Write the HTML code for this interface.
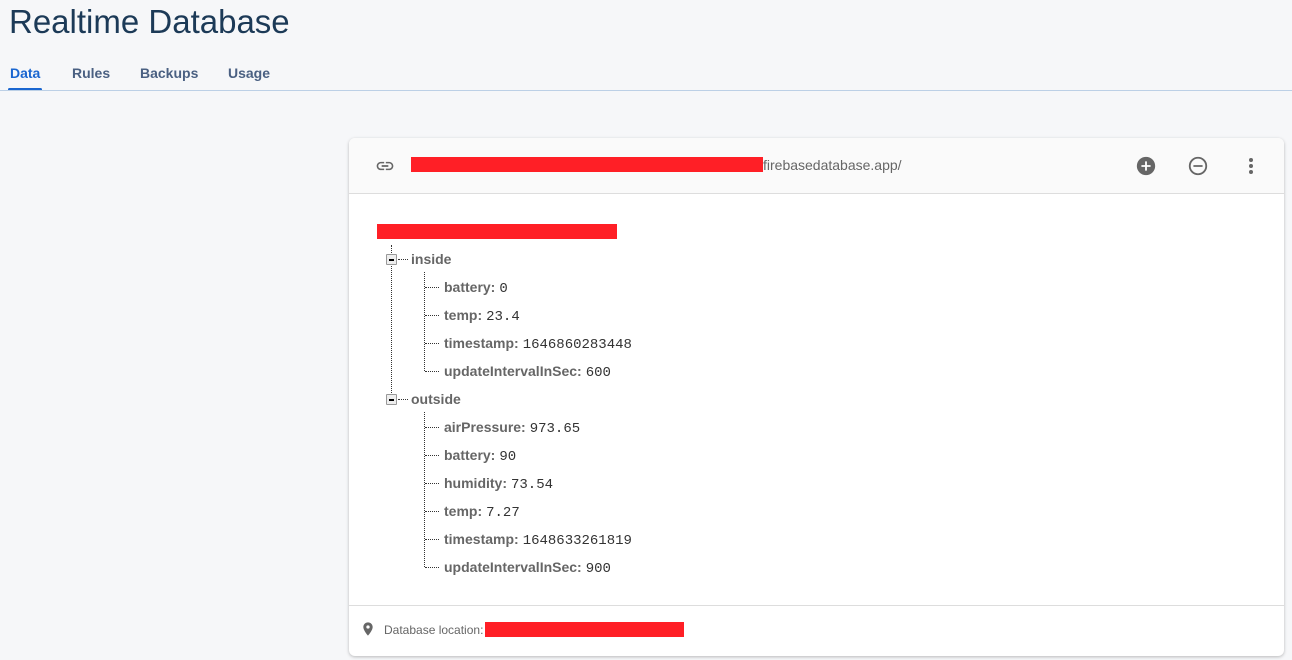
<!DOCTYPE html>
<html><head><style>
body{margin:0;width:1292px;height:660px;background:#f6f7f9;font-family:"Liberation Sans",Arial,sans-serif;position:relative;overflow:hidden}
.a{position:absolute}
h1{position:absolute;left:9px;top:3px;margin:0;font-size:33px;font-weight:normal;color:#1c3a57;letter-spacing:0}
.tab{position:absolute;top:65px;font-size:14px;font-weight:bold;color:#4a6082}
.card{position:absolute;left:349px;top:138px;width:935px;height:518px;background:#fff;border-radius:6px;box-shadow:0 1px 3px rgba(0,0,0,.25);overflow:hidden}
.hdr{position:absolute;left:0;top:0;right:0;height:55px;background:#fafafa;border-bottom:1px solid #ddd}
.red{position:absolute;background:#ff1f26}
.row{position:absolute;font-size:14px;color:#666;font-weight:bold;white-space:nowrap}
.row span{font-family:"Liberation Mono",monospace;font-weight:normal;color:#333;font-size:14px;margin-left:4px}
.vl{position:absolute;border-left:1px dotted #333;width:0}
.hl{position:absolute;border-top:1px dotted #333;height:0}
.box{position:absolute;width:9px;height:9px;border:1px solid #999;background:#eee;border-radius:1px}
.box:after{content:"";position:absolute;left:2px;top:4px;width:5px;height:2px;background:#000}
</style></head><body>
<h1>Realtime Database</h1>
<div class="tab" style="left:10px;color:#1a66d0">Data</div>
<div class="tab" style="left:72px">Rules</div>
<div class="tab" style="left:140px">Backups</div>
<div class="tab" style="left:228px">Usage</div>
<div class="a" style="left:8px;top:88px;width:34px;height:3px;background:#1a66d0;border-radius:2px"></div>
<div class="a" style="left:0;top:90px;width:1292px;height:1px;background:#bcd0e6"></div>

<div class="card">
<div class="hdr">
<svg class="a" style="left:25px;top:18px" width="22" height="20" viewBox="0 0 24 24"><path fill="#666" d="M3.9 12c0-1.710 1.39-3.1 3.1-3.1h4V7H7c-2.76 0-5 2.240-5 5s2.24 5 5 5h4v-1.9H7c-1.71 0-3.1-1.39-3.1-3.1zM8 13h8v-2H8v2zm9-6h-4v1.9h4c1.71 0 3.1 1.39 3.1 3.1s-1.39 3.1-3.1 3.1h-4V17h4c2.76 0 5-2.24 5-5s-2.24-5-5-5z"/></svg>
<div class="red" style="left:62px;top:19px;width:352px;height:15px"></div>
<div class="a" style="left:414px;top:19px;font-size:14px;color:#666">firebasedatabase.app/</div>
<svg class="a" style="left:786px;top:17px" width="22" height="22" viewBox="0 0 24 24"><circle cx="12" cy="12" r="10" fill="#666"/><path d="M12 7v10M7 12h10" stroke="#fff" stroke-width="2"/></svg>
<svg class="a" style="left:838px;top:17px" width="22" height="22" viewBox="0 0 24 24"><circle cx="12" cy="12" r="9" fill="none" stroke="#666" stroke-width="2"/><path d="M7 12h10" stroke="#666" stroke-width="2"/></svg>
<svg class="a" style="left:896px;top:18px" width="12" height="20" viewBox="0 0 12 20"><circle cx="6" cy="4" r="2" fill="#666"/><circle cx="6" cy="10" r="2" fill="#666"/><circle cx="6" cy="16" r="2" fill="#666"/></svg>
</div>
<div class="red" style="left:28px;top:86px;width:240px;height:15px"></div>
<div class="vl" style="left:42px;top:107px;height:154px"></div>
<div class="box" style="left:37px;top:116px"></div><div class="hl" style="left:49px;top:121px;width:10px"></div>
<div class="row" style="left:62px;top:113px">inside</div>
<div class="vl" style="left:75px;top:134px;height:99px"></div>
<div class="hl" style="left:76px;top:149px;width:14px"></div><div class="row" style="left:95px;top:141px">battery:<span>0</span></div>
<div class="hl" style="left:76px;top:177px;width:14px"></div><div class="row" style="left:95px;top:169px">temp:<span>23.4</span></div>
<div class="hl" style="left:76px;top:205px;width:14px"></div><div class="row" style="left:95px;top:197px">timestamp:<span>1646860283448</span></div>
<div class="hl" style="left:76px;top:233px;width:14px"></div><div class="row" style="left:95px;top:225px">updateIntervalInSec:<span>600</span></div>
<div class="box" style="left:37px;top:256px"></div><div class="hl" style="left:49px;top:261px;width:10px"></div>
<div class="row" style="left:62px;top:253px">outside</div>
<div class="vl" style="left:75px;top:274px;height:155px"></div>
<div class="hl" style="left:76px;top:289px;width:14px"></div><div class="row" style="left:95px;top:281px">airPressure:<span>973.65</span></div>
<div class="hl" style="left:76px;top:317px;width:14px"></div><div class="row" style="left:95px;top:309px">battery:<span>90</span></div>
<div class="hl" style="left:76px;top:345px;width:14px"></div><div class="row" style="left:95px;top:337px">humidity:<span>73.54</span></div>
<div class="hl" style="left:76px;top:373px;width:14px"></div><div class="row" style="left:95px;top:365px">temp:<span>7.27</span></div>
<div class="hl" style="left:76px;top:401px;width:14px"></div><div class="row" style="left:95px;top:393px">timestamp:<span>1648633261819</span></div>
<div class="hl" style="left:76px;top:429px;width:14px"></div><div class="row" style="left:95px;top:421px">updateIntervalInSec:<span>900</span></div>
<div class="a" style="left:0;top:467px;width:935px;height:1px;background:#ddd"></div>
<svg class="a" style="left:11px;top:482px" width="16" height="18" viewBox="0 0 24 24"><path fill="#666" d="M12 2C8.13 2 5 5.130 5 9c0 5.25 7 13 7 13s7-7.75 7-13c0-3.87-3.13-7-7-7zm0 9.5a2.5 2.5 0 1 1 0-5 2.5 2.5 0 0 1 0 5z"/></svg>
<div class="a" style="left:35px;top:485px;font-size:12px;color:#666">Database location:</div>
<div class="red" style="left:136px;top:484px;width:199px;height:15px"></div>
</div>
</body></html>
